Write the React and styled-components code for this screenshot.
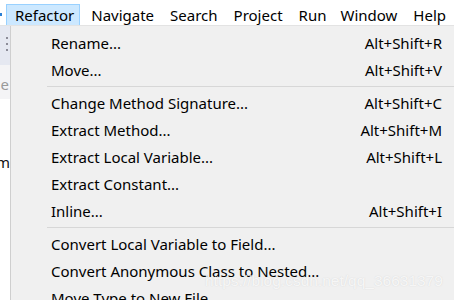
import React from "react";
import styled, { createGlobalStyle } from "styled-components";

const Global = createGlobalStyle`
  html, body { margin: 0; padding: 0; background: #ffffff; }
  body { font-family: "Noto Sans", "Open Sans", sans-serif; overflow: hidden; }
`;

const Page = styled.div`
  width: 454px;
  height: 300px;
  display: flex;
  flex-direction: column;
  position: relative;
  overflow: hidden;
`;

const MenuBar = styled.div`
  height: 26px;
  flex: none;
  display: flex;
  align-items: stretch;
  background: #ffffff;
  border-bottom: 1px solid #e3e3e3;
  box-sizing: border-box;
`;

const Stub = styled.div`
  width: 10px;
  display: flex;
  align-items: center;
`;

const Dot = styled.span`
  width: 2px;
  height: 3px;
  background: #2a7fd4;
  margin-top: 4px;
`;

const BarItem = styled.div`
  display: flex;
  align-items: center;
  padding: 0 ${(p) => p.$pr ?? 7}px 0 ${(p) => p.$pl ?? 7}px;
  margin-top: 4px;
  font-size: 15px;
  color: #000;
  box-sizing: border-box;
  border: 1px solid ${(p) => (p.$active ? "#99d1ff" : "transparent")};
  border-bottom: none;
  background: ${(p) => (p.$active ? "#cce8ff" : "transparent")};
  line-height: 1;
`;

const Body = styled.div`
  flex: 1;
  min-height: 0;
  display: flex;
  overflow: hidden;
`;

const Side = styled.div`
  width: 10px;
  flex: none;
  display: flex;
  flex-direction: column;
  background: #ffffff;
`;

const SideTab = styled.div`
  height: 39px;
  flex: none;
  background: #e5e8f1;
  display: flex;
  flex-direction: column;
  align-items: flex-end;
  padding: 11px 2px 0 0;
  gap: 4px;
  box-sizing: border-box;
`;

const Grip = styled.span`
  width: 2px;
  height: 2px;
  background: #8c8c98;
`;

const SideLight = styled.div`
  height: 34px;
  flex: none;
  background: #f4f4f6;
  overflow: hidden;
  display: flex;
  align-items: center;
  justify-content: flex-end;
  font-size: 15px;
  color: #9a9a9a;
  line-height: 1;
  padding-right: 1px;
  padding-top: 4px;
  box-sizing: border-box;
`;

const SideText = styled.div`
  overflow: hidden;
  flex: none;
  display: flex;
  justify-content: flex-end;
  margin-top: ${(p) => p.$mt}px;
  font-size: 15px;
  color: #111;
  line-height: 1;
  height: 18px;
`;

const Dropdown = styled.div`
  flex: 1;
  background: #f0f0f0;
  border-left: 1px solid #cfcfcf;
  padding-top: 3px;
  display: flex;
  flex-direction: column;
`;

const Item = styled.div`
  height: 27px;
  flex: none;
  display: flex;
  align-items: center;
  justify-content: space-between;
  padding: 0 12px 0 40px;
  font-size: 15px;
  color: #000;
`;

const Separator = styled.div`
  height: 1px;
  flex: none;
  background: #d7d7d7;
  margin: 3px 0 2px 36px;
`;

const Watermark = styled.div`
  position: absolute;
  left: 205px;
  top: 272px;
  font-family: "Liberation Sans", Arial, sans-serif;
  font-size: 15.5px;
  color: rgba(255, 255, 255, 0.8);
  text-shadow: 0 0 1px rgba(180, 180, 180, 0.5);
  pointer-events: none;
  white-space: nowrap;
`;

const groups = [
  [
    ["Rename...", "Alt+Shift+R"],
    ["Move...", "Alt+Shift+V"],
  ],
  [
    ["Change Method Signature...", "Alt+Shift+C"],
    ["Extract Method...", "Alt+Shift+M"],
    ["Extract Local Variable...", "Alt+Shift+L"],
    ["Extract Constant...", ""],
    ["Inline...", "Alt+Shift+I"],
  ],
  [
    ["Convert Local Variable to Field...", ""],
    ["Convert Anonymous Class to Nested...", ""],
    ["Move Type to New File...", ""],
  ],
];

export default function App() {
  return (
    <Page>
      <Global />
      <MenuBar>
        <Stub>
          <Dot />
        </Stub>
        <BarItem $active $pl={8} $pr={5}>Refactor</BarItem>
        <BarItem $pl={10}>Navigate</BarItem>
        <BarItem>Search</BarItem>
        <BarItem>Project</BarItem>
        <BarItem $pr={5}>Run</BarItem>
        <BarItem>Window</BarItem>
        <BarItem>Help</BarItem>
      </MenuBar>
      <Body>
        <Side>
          <SideTab>
            <Grip />
            <Grip />
            <Grip />
          </SideTab>
          <SideLight>e</SideLight>
          <SideText $mt={56}>m</SideText>
        </Side>
        <Dropdown>
          {groups.map((g, gi) => (
            <React.Fragment key={gi}>
              {gi > 0 && <Separator />}
              {g.map(([label, key]) => (
                <Item key={label}>
                  <span>{label}</span>
                  <span>{key}</span>
                </Item>
              ))}
            </React.Fragment>
          ))}
        </Dropdown>
      </Body>
      <Watermark>https://blog.csdn.net/qq_36631379</Watermark>
    </Page>
  );
}
